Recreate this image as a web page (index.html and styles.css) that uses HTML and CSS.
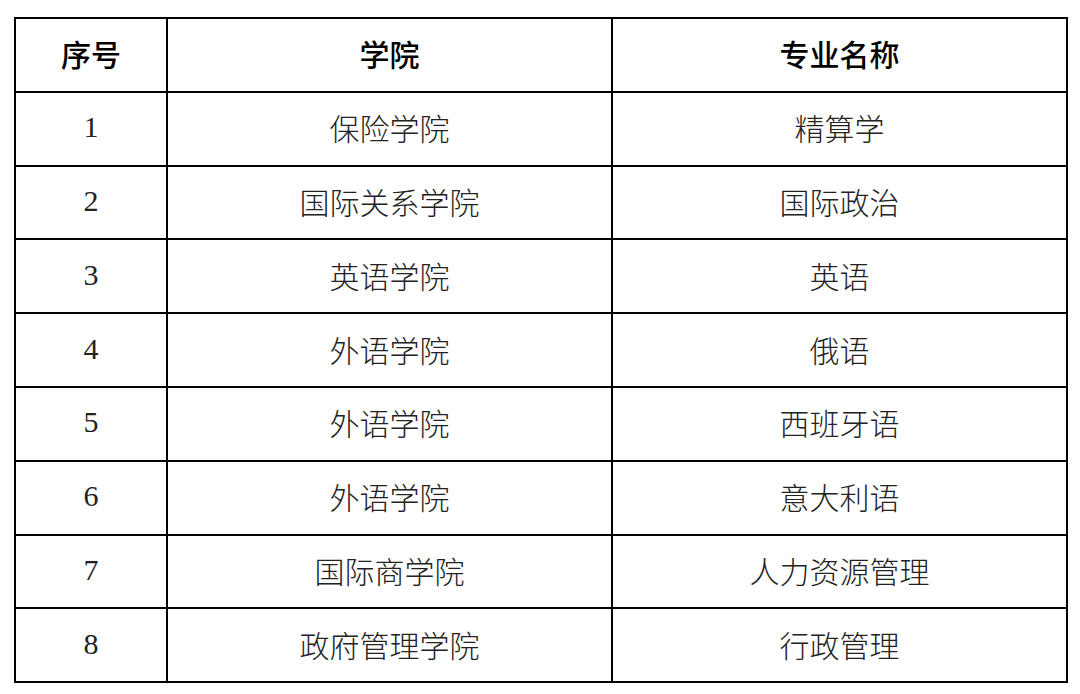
FILE: index.html
```html
<!DOCTYPE html>
<html lang="zh-CN">
<head>
<meta charset="utf-8">
<title>专业名称表</title>
<link rel="stylesheet" href="styles.css">
</head>
<body>
<table class="majors">
  <colgroup>
    <col class="c-no">
    <col class="c-college">
    <col class="c-major">
  </colgroup>
  <thead>
    <tr><th>序号</th><th>学院</th><th>专业名称</th></tr>
  </thead>
  <tbody>
    <tr><td class="num">1</td><td>保险学院</td><td>精算学</td></tr>
    <tr><td class="num">2</td><td>国际关系学院</td><td>国际政治</td></tr>
    <tr><td class="num">3</td><td>英语学院</td><td>英语</td></tr>
    <tr><td class="num">4</td><td>外语学院</td><td>俄语</td></tr>
    <tr><td class="num">5</td><td>外语学院</td><td>西班牙语</td></tr>
    <tr><td class="num">6</td><td>外语学院</td><td>意大利语</td></tr>
    <tr><td class="num">7</td><td>国际商学院</td><td>人力资源管理</td></tr>
    <tr><td class="num">8</td><td>政府管理学院</td><td>行政管理</td></tr>
  </tbody>
</table>
</body>
</html>
```
FILE: styles.css
```css
html, body {
  margin: 0;
  padding: 0;
  background: #ffffff;
}
body {
  padding: 17px 0 0 14px;
  font-family: "Noto Sans CJK SC", "Noto Sans", sans-serif;
  color: #1a1a1a;
}
.majors {
  border-collapse: collapse;
  width: 1052px;
  table-layout: fixed;
}
.c-no { width: 152px; }
.c-college { width: 445px; }
.c-major { width: 455px; }
.majors th,
.majors td {
  border: 2px solid #000;
  height: 68.8px;
  padding: 0 0 3px;
  text-align: center;
  vertical-align: middle;
  font-size: 30px;
  line-height: 1;
}
.majors th {
  font-weight: 500;
  color: #000;
}
.majors td {
  font-weight: 300;
  color: #222;
}
.majors td.num {
  font-family: "Liberation Serif", "Times New Roman", serif;
  font-weight: 400;
  font-size: 30px;
}
```
